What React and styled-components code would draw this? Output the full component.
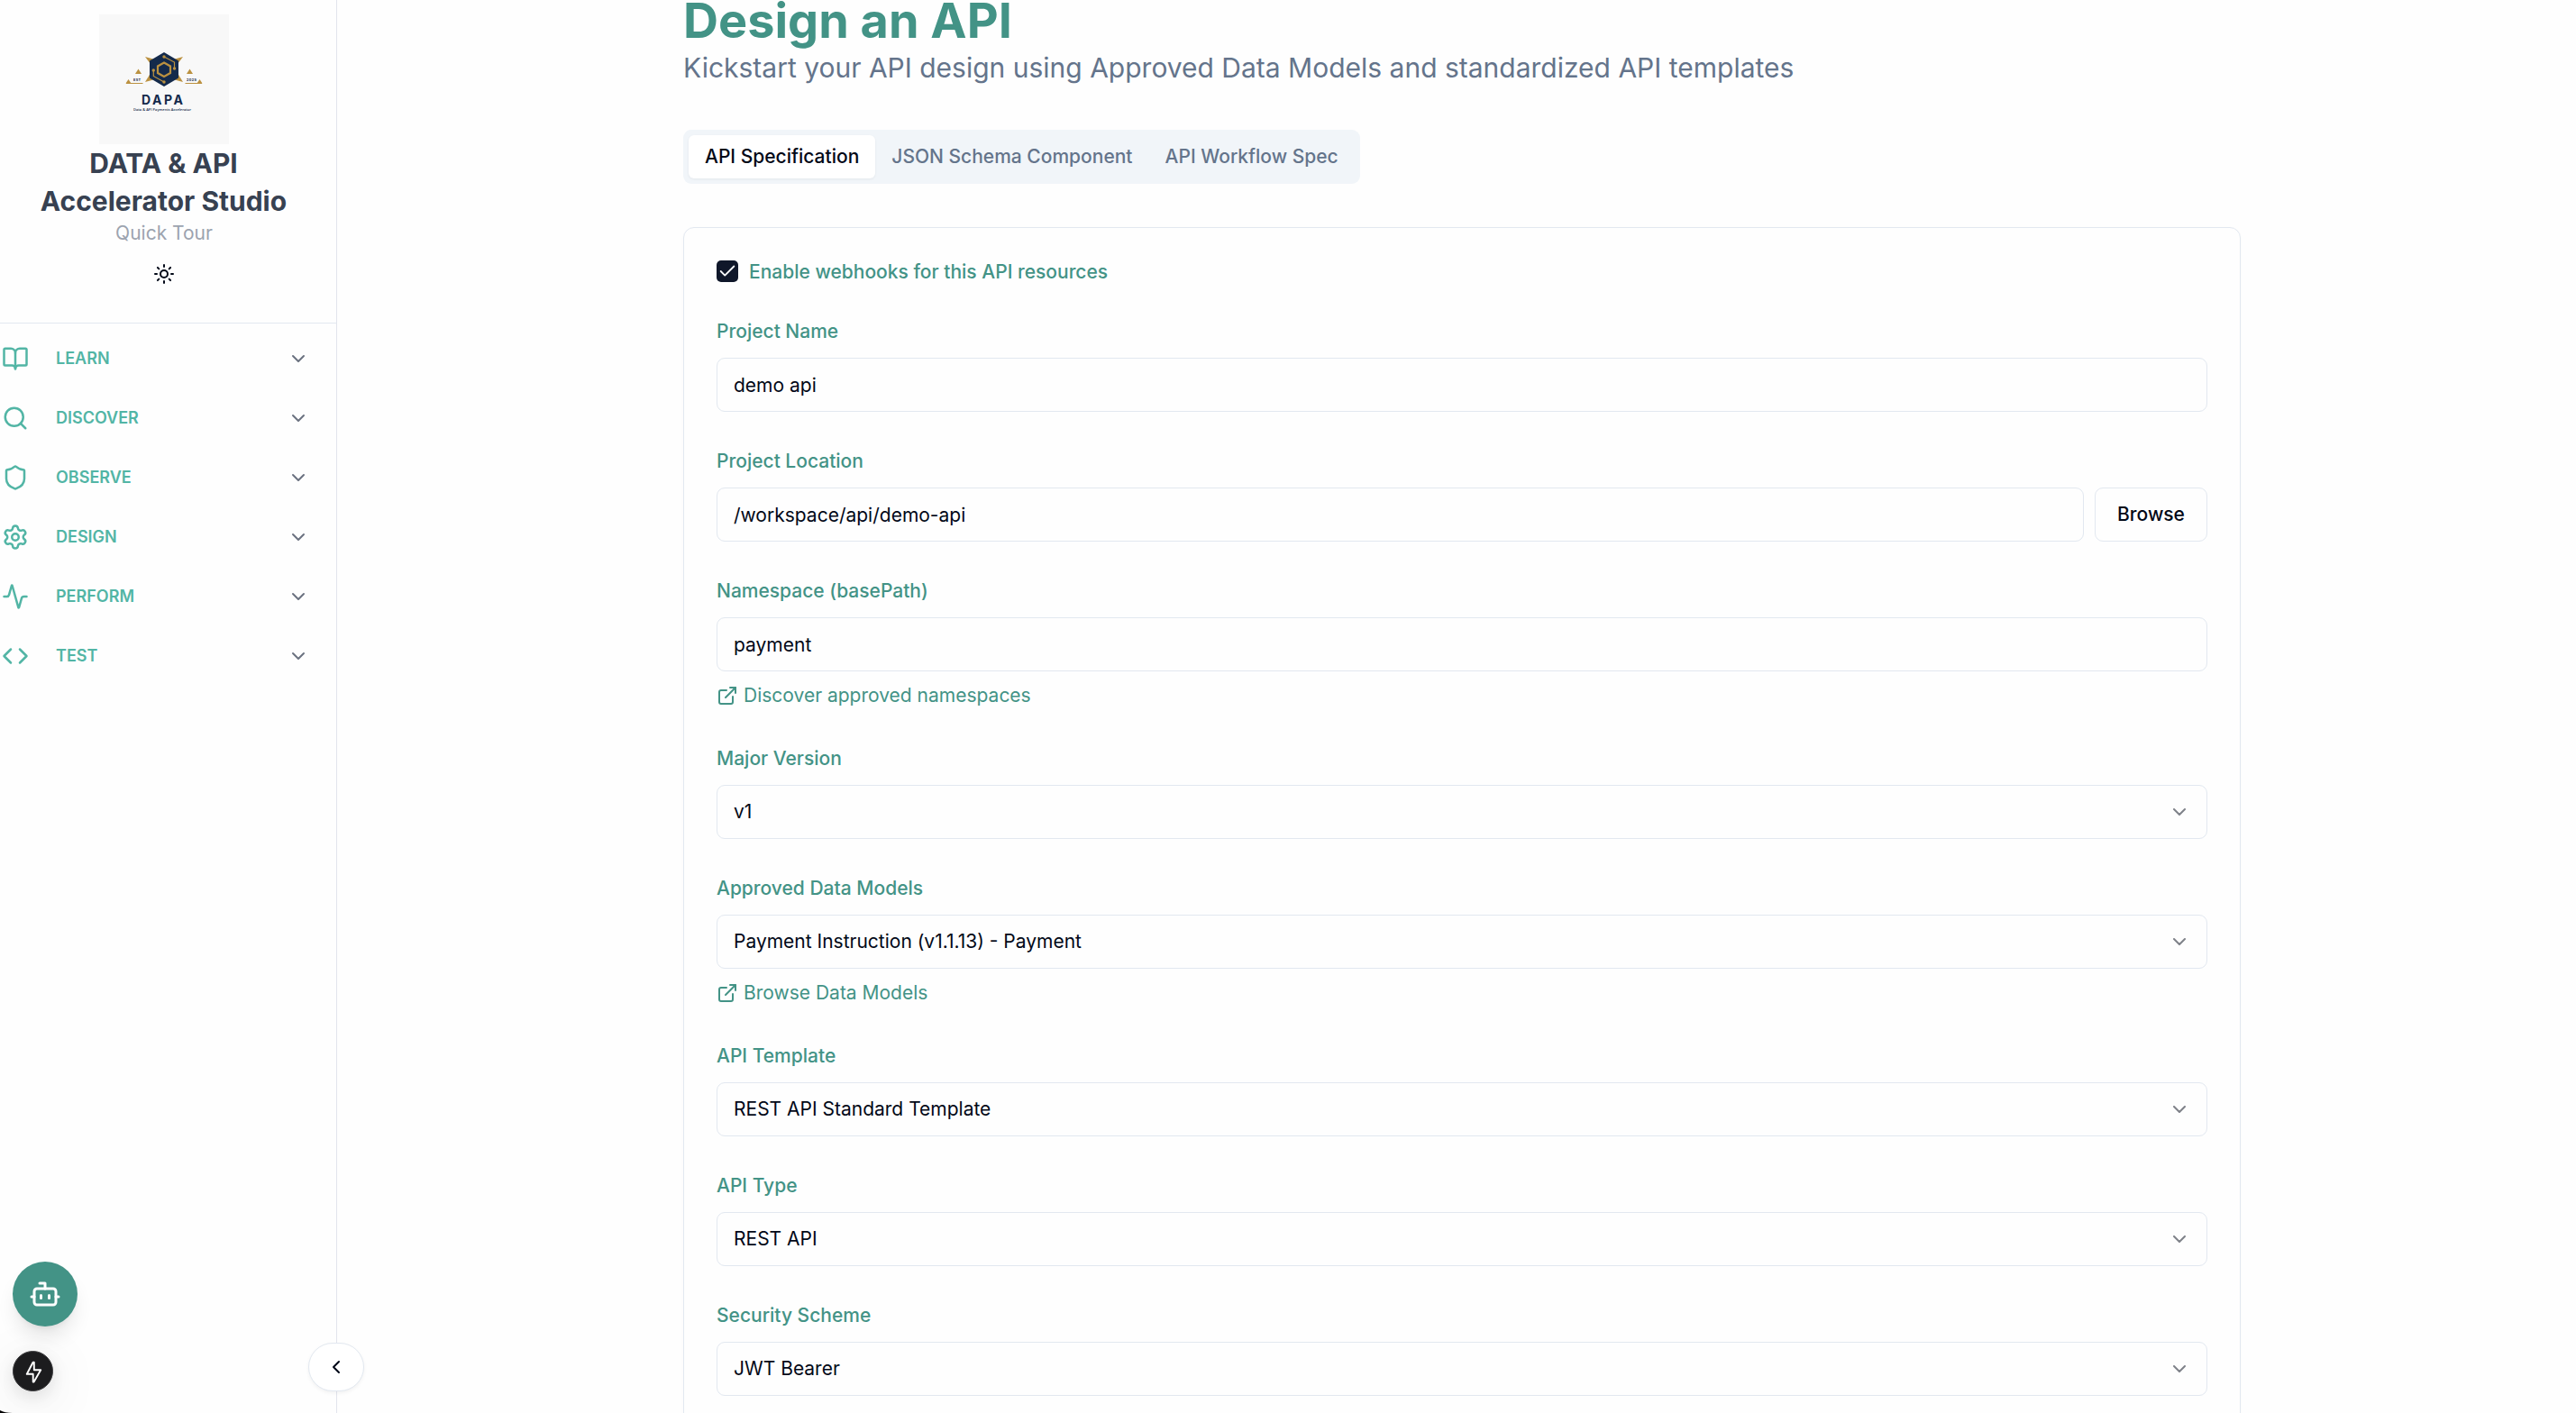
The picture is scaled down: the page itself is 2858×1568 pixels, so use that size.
import React from "react";
import styled, { createGlobalStyle } from "styled-components";
import {
  Activity,
  BookOpen,
  Bot,
  Check,
  ChevronDown,
  ChevronLeft,
  Code,
  ExternalLink,
  Search,
  Settings,
  Shield,
  Sun,
} from "lucide-react";

const GlobalStyle = createGlobalStyle`
  *, *::before, *::after { box-sizing: border-box; }
  html, body { margin: 0; padding: 0; height: 100%; overflow: hidden; background: #fefefe; }
  body {
    font-family: Inter, "Liberation Sans", sans-serif;
    font-size: 21px;
    color: #020817;
  }
  button, input { font: inherit; color: inherit; }
`;

const Shell = styled.div`
  display: flex;
  width: 100%;
  height: 1568px;
  overflow: hidden;
  position: relative;
`;

const Sidebar = styled.aside`
  flex: none;
  width: 374px;
  height: 100%;
  border-right: 1px solid #e2e4ec;
`;

const Brand = styled.header`
  display: flex;
  flex-direction: column;
  align-items: center;
  height: 359px;
  padding: 16px 9px 0 0;
  border-bottom: 1px solid #e2e8f0;
`;

const BrandTitle = styled.h2`
  margin: 0;
  padding-right: 1px;
  text-align: center;
  font-size: 30px;
  line-height: 42px;
  font-weight: 700;
  color: #374151;
`;

const Tour = styled.a`
  font-size: 21px;
  line-height: 30px;
  color: #9ca3af;
`;

const ThemeToggle = styled.button`
  display: flex;
  align-items: center;
  justify-content: center;
  width: 54px;
  height: 60px;
  padding: 0;
  border: 0;
  background: none;
`;

const Nav = styled.nav`
  display: flex;
  flex-direction: column;
  padding-top: 6px;
`;

const NavItem = styled.a`
  display: flex;
  align-items: center;
  height: 66px;
  padding: 0 30px 0 2px;
  color: #52b5a5;
`;

const NavLabel = styled.span`
  flex: 1;
  margin-left: 30px;
  padding-bottom: 2px;
  font-size: 18px;
  font-weight: 600;
`;

const NavChevron = styled(ChevronDown)`
  color: #6b7280;
`;

const Main = styled.main`
  flex: 1;
  display: flex;
  flex-direction: column;
  padding: 0 372px 0 384px;
`;

const Title = styled.h1`
  flex: none;
  margin: 0;
  height: 56px;
  font-size: 54px;
  line-height: 46px;
  font-weight: 700;
  color: #439386;
`;

const Subtitle = styled.p`
  flex: none;
  margin: 0;
  height: 88px;
  font-size: 30px;
  line-height: 38px;
  color: #64748b;
`;

const Tabs = styled.div`
  display: flex;
  flex: none;
  align-self: flex-start;
  height: 60px;
  padding: 6px;
  border-radius: 9px;
  background: #f1f5f9;
`;

const Tab = styled.button`
  height: 48px;
  padding: 0 18px 2px;
  border: 0;
  border-radius: 6px;
  font-weight: 500;
  color: ${(p) => (p.$active ? "#020817" : "#64748b")};
  background: ${(p) => (p.$active ? "#ffffff" : "transparent")};
  box-shadow: ${(p) => (p.$active ? "0 1px 3px rgba(0, 0, 0, 0.06)" : "none")};
`;

const Card = styled.section`
  display: flex;
  flex-direction: column;
  gap: 36px;
  flex: none;
  margin-top: 48px;
  height: 1500px;
  padding: 36px;
  border: 1px solid #e2e8f0;
  border-radius: 12px;
  box-shadow: 0 1px 3px rgba(0, 0, 0, 0.03);
`;

const CheckRow = styled.label`
  display: flex;
  align-items: center;
  gap: 12px;
  height: 24px;
  font-weight: 500;
  color: #439386;
`;

const CheckBox = styled.span`
  display: flex;
  align-items: center;
  justify-content: center;
  width: 24px;
  height: 24px;
  border-radius: 5px;
  background: #0f172a;
  color: #f8fafc;
`;

const FieldBox = styled.div`
  display: flex;
  flex-direction: column;
  gap: 12px;
`;

const FieldLabel = styled.label`
  height: 36px;
  padding-top: 2px;
  line-height: 34px;
  font-weight: 500;
  color: #439386;
`;

const ControlRow = styled.div`
  display: flex;
  gap: 12px;
`;

const Input = styled.input`
  flex: 1;
  height: 60px;
  padding: 0 18px;
  border: 1px solid #e2e8f0;
  border-radius: 9px;
  outline: none;
  background: transparent;
`;

const Select = styled.div`
  flex: 1;
  display: flex;
  align-items: center;
  justify-content: space-between;
  height: 60px;
  padding: 0 18px;
  border: 1px solid #e2e8f0;
  border-radius: 9px;
`;

const SelectValue = styled.span`
  padding-bottom: 1px;
`;

const SelectChevron = styled(ChevronDown)`
  opacity: 0.5;
`;

const OutlineButton = styled.button`
  height: 60px;
  width: 125px;
  padding: 0 0 2px;
  border: 1px solid #e2e8f0;
  border-radius: 9px;
  background: transparent;
  font-weight: 500;
`;

const HelpLink = styled.a`
  display: flex;
  align-items: center;
  gap: 6px;
  height: 30px;
  color: #439386;
`;

const HelpText = styled.span`
  padding-bottom: 2px;
`;

const AssistantButton = styled.button`
  position: absolute;
  left: 14px;
  top: 1400px;
  display: flex;
  align-items: center;
  justify-content: center;
  width: 72px;
  height: 72px;
  padding: 0;
  border: 0;
  border-radius: 50%;
  background: #439386;
  color: #ffffff;
  box-shadow: 0 15px 22px -4px rgba(0, 0, 0, 0.1), 0 6px 9px -6px rgba(0, 0, 0, 0.1);
`;

const DevBadge = styled.div`
  position: absolute;
  left: 14px;
  top: 1499px;
  display: flex;
  align-items: center;
  justify-content: center;
  width: 45px;
  height: 45px;
  border-radius: 50%;
  border: 1px solid #3c3c3e;
  background: #1c1c1e;
  box-shadow: 0 12px 60px rgba(0, 0, 0, 0.1), 0 6px 18px rgba(0, 0, 0, 0.1);
`;

const CollapseButton = styled.button`
  position: absolute;
  left: 342px;
  top: 1490px;
  display: flex;
  align-items: center;
  justify-content: center;
  width: 62px;
  height: 54px;
  padding: 0;
  border: 1px solid #e2e8f0;
  border-radius: 27px;
  background: #ffffff;
  box-shadow: 0 2px 4px rgba(0, 0, 0, 0.05);
`;

const WindowCorner = styled.svg`
  position: absolute;
  left: 0;
  bottom: 0;
`;

const LogoSvg = styled.svg`
  display: block;
  flex: none;
`;

const NAVY = "#142a4b";
const GOLD = "#bb9140";

function Logo() {
  return (
    <LogoSvg width="144" height="144" viewBox="0 0 144 144">
      <rect width="144" height="144" fill="#f8f8f8" />
      <g fill={GOLD}>
        <path d="M51 47 L60 49.500 L57 55 Z" />
        <path d="M93 47 L84 49.500 L87 55 Z" />
        <path d="M51 75 L56.500 66 L62 72 Z" />
        <path d="M93 75 L87.500 66 L82 72 Z" />
        <path d="M43.500 60.500 L47 66 L40 66 Z" />
        <path d="M100.500 60.500 L104 66 L97 66 Z" />
        <path d="M32.500 72 L35.500 76.500 L29.500 76.500 Z" />
        <path d="M111.500 72 L114.500 76.500 L108.500 76.500 Z" />
        <rect x="30" y="76" width="18.500" height="1" />
        <rect x="95.500" y="76" width="18.500" height="1" />
      </g>
      <path d="M72 42 L88 51.500 L88 70.500 L72 80 L56 70.500 L56 51.500 Z" fill={NAVY} />
      <path d="M72 53.500 L79 57.500 L79 65 L72 69 L65 65 L65 57.500 Z" fill="none" stroke={GOLD} strokeWidth="2.200" />
      <g fill="none" stroke={GOLD} strokeWidth="1.200">
        <path d="M72 47 L83.500 53 L83.500 60" />
        <path d="M72 75 L60.300 68.500 L60.300 62" />
      </g>
      <g fill={GOLD}>
        <circle cx="72" cy="47" r="1.700" />
        <circle cx="83.500" cy="60" r="1.700" />
        <circle cx="72" cy="75" r="1.700" />
        <circle cx="60.300" cy="62" r="1.700" />
      </g>
      <g fill={NAVY} textAnchor="middle">
        <text x="42" y="74" fontSize="3.800" fontWeight="700" textLength="8">EST</text>
        <text x="102.500" y="74" fontSize="3.800" fontWeight="700" textLength="11">2025</text>
        <text x="70" y="100" fontSize="14" fontWeight="700" textLength="46">DAPA</text>
        <text x="70" y="106.500" fontFamily='"Open Sans", sans-serif' fontSize="4" fontWeight="600" textLength="64">Data &amp; API Payments Accelerator</text>
      </g>
    </LogoSvg>
  );
}

function Bolt() {
  return (
    <svg width="24" height="30" viewBox="0 0 24 30" fill="none" stroke="#ffffff" strokeWidth="1.900" strokeLinejoin="round">
      <path d="M12.800 4.800 H11.600 L4.800 17.800 H11.700 V26.500 H12.600 L20.200 13.200 H12.800 Z" />
    </svg>
  );
}

const sections = [
  { label: "LEARN", Icon: BookOpen },
  { label: "DISCOVER", Icon: Search },
  { label: "OBSERVE", Icon: Shield },
  { label: "DESIGN", Icon: Settings },
  { label: "PERFORM", Icon: Activity },
  { label: "TEST", Icon: Code },
];

function Field({ label, help, children }) {
  return (
    <FieldBox>
      <FieldLabel>{label}</FieldLabel>
      <ControlRow>{children}</ControlRow>
      {help && (
        <HelpLink>
          <ExternalLink size={24} />
          <HelpText>{help}</HelpText>
        </HelpLink>
      )}
    </FieldBox>
  );
}

function SelectField({ label, value, help }) {
  return (
    <Field label={label} help={help}>
      <Select>
        <SelectValue>{value}</SelectValue>
        <SelectChevron size={24} />
      </Select>
    </Field>
  );
}

export default function App() {
  return (
    <>
      <GlobalStyle />
      <Shell>
        <Sidebar>
          <Brand>
            <Logo />
            <BrandTitle>
              DATA &amp; API
              <br />
              Accelerator Studio
            </BrandTitle>
            <Tour>Quick Tour</Tour>
            <ThemeToggle>
              <Sun size={24} />
            </ThemeToggle>
          </Brand>
          <Nav>
            {sections.map(({ label, Icon }) => (
              <NavItem key={label}>
                <Icon size={30} />
                <NavLabel>{label}</NavLabel>
                <NavChevron size={24} />
              </NavItem>
            ))}
          </Nav>
        </Sidebar>
        <Main>
          <Title>Design an API</Title>
          <Subtitle>Kickstart your API design using Approved Data Models and standardized API templates</Subtitle>
          <Tabs>
            <Tab $active>API Specification</Tab>
            <Tab>JSON Schema Component</Tab>
            <Tab>API Workflow Spec</Tab>
          </Tabs>
          <Card>
            <CheckRow>
              <CheckBox>
                <Check size={22} strokeWidth={2} />
              </CheckBox>
              Enable webhooks for this API resources
            </CheckRow>
            <Field label="Project Name">
              <Input defaultValue="demo api" />
            </Field>
            <Field label="Project Location">
              <Input defaultValue="/workspace/api/demo-api" />
              <OutlineButton>Browse</OutlineButton>
            </Field>
            <Field label="Namespace (basePath)" help="Discover approved namespaces">
              <Input defaultValue="payment" />
            </Field>
            <SelectField label="Major Version" value="v1" />
            <SelectField
              label="Approved Data Models"
              value="Payment Instruction (v1.1.13) - Payment"
              help="Browse Data Models"
            />
            <SelectField label="API Template" value="REST API Standard Template" />
            <SelectField label="API Type" value="REST API" />
            <SelectField label="Security Scheme" value="JWT Bearer" />
          </Card>
        </Main>
        <AssistantButton>
          <Bot size={36} />
        </AssistantButton>
        <DevBadge>
          <Bolt />
        </DevBadge>
        <CollapseButton>
          <ChevronLeft size={24} />
        </CollapseButton>
        <WindowCorner width="14" height="4" viewBox="0 0 14 4">
          <path d="M0 1 Q5 4 14 4 H0 Z" fill="#000000" />
        </WindowCorner>
      </Shell>
    </>
  );
}
